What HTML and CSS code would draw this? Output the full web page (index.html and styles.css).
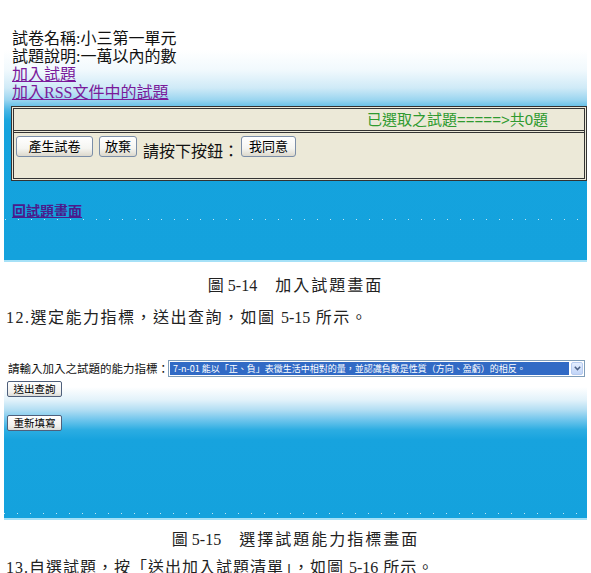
FILE: index.html
```html
<!DOCTYPE html>
<html lang="zh-Hant">
<head>
<meta charset="utf-8">
<title>加入試題畫面</title>
<link rel="stylesheet" href="styles.css">
</head>
<body>
<div class="shot shot1">
  <div class="info">
    <div class="line">試卷名稱:小三第一單元</div>
    <div class="line">試題說明:一萬以內的數</div>
    <a class="line link" href="#">加入試題</a>
    <a class="line link" href="#">加入RSS文件中的試題</a>
  </div>
  <div class="panel">
    <div class="panel-top"><span class="selected-count">已選取之試題=====&gt;共0題</span></div>
    <div class="panel-body">
      <button class="btn btn-generate">產生試卷</button>
      <button class="btn btn-abandon">放棄</button>
      <span class="prompt">請按下按鈕：</span>
      <button class="btn btn-agree">我同意</button>
    </div>
  </div>
  <a class="back-link" href="#">回試題畫面</a>
  <div class="dots dots1"></div>
</div>
<p class="caption"><span class="fig-no">圖 5-14</span>　加入試題畫面</p>
<p class="para">12.選定能力指標，送出查詢，如圖 <span class="fig-no">5-15</span> 所示。</p>
<div class="shot shot2">
  <div class="ability-row">
    <span class="ability-label">請輸入加入之試題的能力指標：</span>
    <div class="select">
      <span class="select-value">7-n-01 能以「正、負」表徵生活中相對的量，並認識負數是性質（方向、盈虧）的相反。</span>
      <span class="select-arrow"><svg width="7" height="5" viewBox="0 0 7 5"><polyline points="0.8,0.8 3.5,3.6 6.2,0.8" fill="none" stroke="#4d6185" stroke-width="1.5"/></svg></span>
    </div>
  </div>
  <button class="btn-small btn-submit">送出查詢</button>
  <button class="btn-small btn-reset">重新填寫</button>
  <div class="dots dots2"></div>
</div>
<p class="caption caption2"><span class="fig-no">圖 5-15</span>　選擇試題能力指標畫面</p>
<p class="para para2">13.自選試題，按「送出加入試題清單」，如圖 <span class="fig-no">5-16</span> 所示。</p>
</body>
</html>
```
FILE: styles.css
```css
body {
  margin: 0;
  width: 591px;
  background: #fff;
  color: #111;
  font-family: "Liberation Serif", "Noto Sans CJK TC", serif;
  overflow: hidden;
}

.shot {
  margin-left: 4px;
  width: 583px;
  box-sizing: border-box;
  display: flex;
  flex-direction: column;
  border-bottom: 2px solid #a6e1f7;
}

.shot1 {
  height: 262px;
  padding: 30px 0 0 8px;
  background: linear-gradient(180deg,
    #ffffff 0px, #ffffff 50px, #f1f9fd 70px, #cfeaf7 88px,
    #9ad5f0 100px, #4ab6e5 110px, #1ca6de 120px, #15a3de 130px, #14a2dd 100%);
}

.info .line {
  display: block;
  font: 16px/18px "Liberation Serif", "Noto Sans CJK TC", serif;
  color: #111;
}

.info .link {
  color: #7a1a9a;
  text-decoration: underline;
  align-self: flex-start;
}

.panel {
  margin: 4px 0 0 -1px;
  height: 75px;
  box-sizing: border-box;
  border: 3px double #333;
  background: #ece9d8;
}

.panel-top {
  height: 21px;
  border-bottom: 3px double #333;
  display: flex;
  justify-content: flex-end;
  align-items: center;
  padding-right: 36px;
}

.selected-count {
  color: #2f9a2f;
  font: 15px/21px "Liberation Sans", "Noto Sans CJK TC", sans-serif;
}

.panel-body {
  display: flex;
  align-items: flex-start;
  gap: 6px;
  padding: 3px 0 0 2px;
}

.btn {
  height: 21px;
  padding: 0 0 3px;
  font: 13px/1 "Noto Sans CJK TC", sans-serif;
  color: #000;
  border: 1px solid #7b8ea8;
  border-radius: 3px;
  background: linear-gradient(180deg, #ffffff, #f5f5f1 60%, #dcd8cc);
}

.btn-generate { width: 77px; }
.btn-abandon { width: 38px; }
.btn-agree { width: 55px; }

.prompt {
  margin: 6px -4px 0 0;
  font: 16px/16px "Noto Sans CJK TC", sans-serif;
  color: #111;
}

.back-link {
  margin-top: 21px;
  align-self: flex-start;
  font: bold 14px/16px "Noto Sans CJK TC", sans-serif;
  color: #4b1a8c;
  text-decoration: underline;
}

.dots {
  height: 1px;
  background: repeating-linear-gradient(90deg, rgba(255, 255, 255, 0.75) 0 1px, transparent 1px 13px);
}

.dots1 {
  margin: 1px 0 0 -7px;
}

.caption {
  margin: 14px 0 0;
  text-align: center;
  letter-spacing: 2px;
  font: 16px/20px "Liberation Serif", "Noto Sans CJK TC", serif;
  color: #222;
}

.fig-no {
  letter-spacing: 0;
}

.para {
  margin: 12px 0 0;
  padding-left: 6px;
  letter-spacing: 1.5px;
  white-space: nowrap;
  font: 16px/20px "Liberation Serif", "Noto Sans CJK TC", serif;
  color: #222;
}

.shot2 {
  margin-top: 17px;
  height: 175px;
  padding: 15px 0 0 3px;
  background: linear-gradient(180deg,
    #ffffff 0px, #ffffff 42px, #e2f2fa 55px, #b2def3 65px,
    #6ec5ec 75px, #2cade2 85px, #17a3de 95px, #14a2dd 100%);
}

.ability-row {
  display: flex;
  align-items: center;
  height: 17px;
}

.ability-label {
  width: 160px;
  margin-left: 1px;
  white-space: nowrap;
  font: 11.5px/17px "Noto Sans CJK TC", sans-serif;
  color: #111;
}

.select {
  width: 417px;
  height: 17px;
  box-sizing: border-box;
  display: flex;
  padding: 1px;
  border: 1px solid #7f9db9;
  background: #fff;
}

.select-value {
  flex: 1;
  padding-left: 3px;
  background: #316ac5;
  color: #fff;
  white-space: nowrap;
  overflow: hidden;
  font: 9px/13px "Noto Sans CJK TC", sans-serif;
}

.select-arrow {
  width: 12px;
  margin-left: 2px;
  box-sizing: border-box;
  display: flex;
  align-items: center;
  justify-content: center;
  border: 1px solid #b7cbef;
  border-radius: 2px;
  background: linear-gradient(180deg, #e4eefe, #c2d5f8);
}

.btn-small {
  align-self: flex-start;
  width: 55px;
  height: 16px;
  padding: 0;
  font: 10.5px/1 "Noto Sans CJK TC", sans-serif;
  color: #000;
  border: 1px solid #4f607c;
  border-radius: 2px;
  background: linear-gradient(180deg, #ffffff, #f1f1ee 70%, #dcdcd8);
}

.btn-submit { margin-top: 4px; }
.btn-reset { margin-top: 18px; }

.dots2 {
  margin: auto 0 4px -3px;
}

.caption2 {
  margin-top: 10px;
}

.para2 {
  margin-top: 8px;
  letter-spacing: 1px;
}
```
